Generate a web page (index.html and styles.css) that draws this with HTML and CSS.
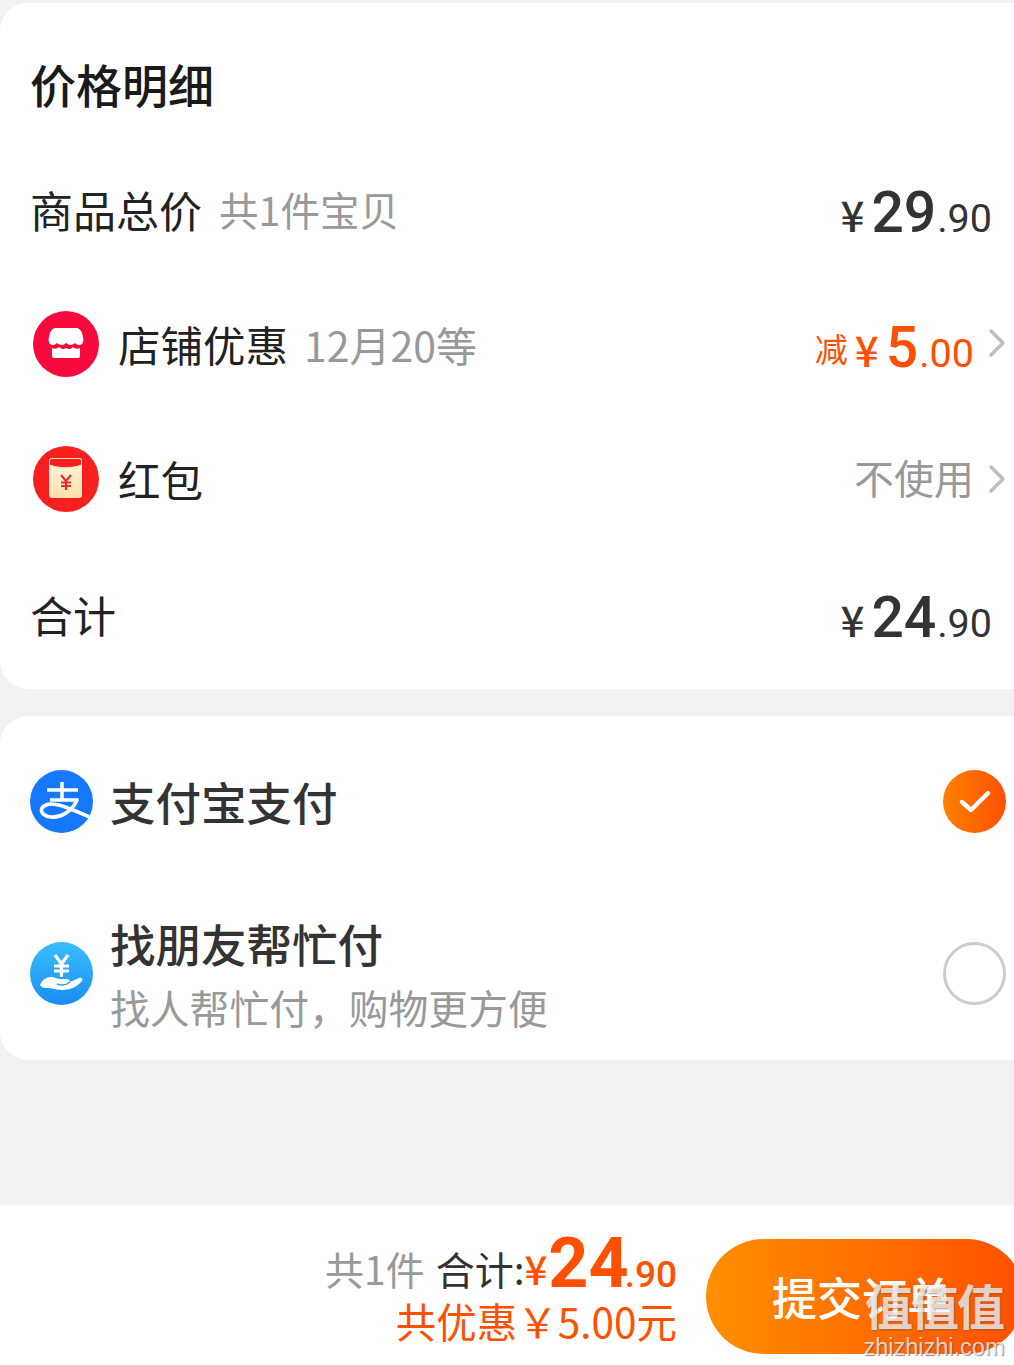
FILE: index.html
```html
<!DOCTYPE html>
<html lang="zh">
<head>
<meta charset="utf-8">
<title>价格明细</title>
<link rel="stylesheet" href="styles.css">
</head>
<body>
<div class="page">
  <section class="card detail">
    <h1 class="title">价格明细</h1>
    <div class="row">
      <div class="label label-plain"><span>商品总价</span><span class="note note-first">共1件宝贝</span></div>
      <div class="price"><span class="cur">¥</span><span class="big">29</span><span class="dec">.90</span></div>
    </div>
    <div class="row">
      <div class="label">
        <svg class="ico ico-list" viewBox="0 0 66 66"><circle cx="33" cy="33" r="33" fill="#f70a3d"/><path d="M23 17h20c3 0 5 2 6 5l1 4c1 3 0 6-1 7-2 2-5 1-7-1-2 2-6 3-9 0-3 3-7 2-9 0-2 2-5 3-7 1-1-1-2-4-1-7l1-4c1-3 3-5 6-5z" fill="#fff"/><path d="M19 37c2 1 5 1 7-1 2 2 5 3 7 1 3 2 5 1 7-1 2 2 4 2 7 1v8c0 1-1 2-2 2H21c-1 0-2-1-2-2z" fill="#fff"/></svg>
        <span>店铺优惠</span><span class="note note-shop">12月20等</span>
      </div>
      <div class="price orange"><span class="minus">减</span><span class="cur">¥</span><span class="big">5</span><span class="dec">.00</span>
        <svg class="chev" viewBox="0 0 18 30"><path d="M3 3l12 12L3 27" fill="none" stroke="#bdbdbd" stroke-width="3.4" stroke-linecap="round" stroke-linejoin="round"/></svg>
      </div>
    </div>
    <div class="row">
      <div class="label">
        <svg class="ico ico-list" viewBox="0 0 66 66"><defs><linearGradient id="pk" x1="0" y1="0" x2="0" y2="1"><stop offset="0" stop-color="#fff4de"/><stop offset="1" stop-color="#fde2ae"/></linearGradient></defs><circle cx="33" cy="33" r="33" fill="#f6201e"/><rect x="16" y="12" width="33" height="40" rx="3" fill="url(#pk)"/><path d="M16.5 15c0-2 1-2.500 2.500-2.500h27c1.500 0 2.500.5 2.500 2.500v4c-10 3.500-22 3.500-32 0z" fill="#f6201e" stroke="#ffe3c0" stroke-width="1"/><path d="M28 29l5 6 5-6M33 35v9M28 36.500h10M28 40h10" fill="none" stroke="#e8302a" stroke-width="2.200"/></svg>
        <span>红包</span>
      </div>
      <div class="price muted"><span class="muted-text">不使用</span>
        <svg class="chev" viewBox="0 0 18 30"><path d="M3 3l12 12L3 27" fill="none" stroke="#bdbdbd" stroke-width="3.4" stroke-linecap="round" stroke-linejoin="round"/></svg>
      </div>
    </div>
    <div class="row">
      <div class="label label-plain"><span>合计</span></div>
      <div class="price"><span class="cur">¥</span><span class="big">24</span><span class="dec">.90</span></div>
    </div>
  </section>

  <section class="card pay">
    <div class="pay-row pay-row-one">
      <svg class="ico" viewBox="0 0 63 63"><clipPath id="ac"><circle cx="31.5" cy="31.5" r="31.5"/></clipPath><circle cx="31.5" cy="31.500" r="31.5" fill="#1677ff"/><g clip-path="url(#ac)" fill="none" stroke="#fff" stroke-width="3.6"><path d="M17 20h31M32 12v18M20 30h28"/><path d="M47 30C42 42 30 48 21 47 11 46 8 38 16 35c9-4 28 5 48 14" stroke-linecap="round"/></g></svg>
      <div class="pay-name">支付宝支付</div>
      <span class="radio radio-on"><svg viewBox="0 0 32 26"><path d="M3 14l9 8L29 5" fill="none" stroke="#fff" stroke-width="4.4" stroke-linecap="round" stroke-linejoin="round"/></svg></span>
    </div>
    <div class="pay-row pay-row-two">
      <svg class="ico" viewBox="0 0 63 63"><defs><linearGradient id="fr" x1="0" y1="0" x2="0" y2="1"><stop offset="0" stop-color="#38bfff"/><stop offset="1" stop-color="#1b8cf0"/></linearGradient></defs><circle cx="31.5" cy="31.5" r="31.5" fill="url(#fr)"/><path d="M25 13l6.500 9 6.500-9M31.500 22v13M24 24h15M24 29h15" fill="none" stroke="#fff" stroke-width="3.200"/><path d="M10 43c2-5 6-8 11-8 3 0 6 2 10 2h5c3 0 4 1 4 3l9-4c3-1 4 1 3 3-4 5-11 9-20 9-5 0-10-2-14-2-3 0-6 0-8-3z" fill="#fff"/><path d="M27 42c4 1.500 9 1.500 13-2" fill="none" stroke="#2a9ff5" stroke-width="1.400"/></svg>
      <div class="pay-text">
        <div class="pay-name">找朋友帮忙付</div>
        <div class="pay-sub">找人帮忙付，购物更方便</div>
      </div>
      <span class="radio"></span>
    </div>
  </section>

  <footer class="bar">
    <div class="sum">
      <div class="sum-line"><span class="sum-count">共1件</span><span class="sum-label">合计:</span><span class="sum-cur">¥</span><span class="sum-big">24</span><span class="sum-dec">.90</span></div>
      <div class="sum-save">共优惠￥5.00元</div>
    </div>
    <button class="submit">提交订单</button>
  </footer>

  <div class="mark"><div class="mark-big">值值值</div><div class="mark-url">zhizhizhi.com</div></div>
</div>
</body>
</html>
```

FILE: styles.css
```css
* { box-sizing: border-box; }
html, body { margin: 0; padding: 0; }
body {
  background: #f2f2f2;
  font-family: "Noto Sans CJK SC", "Noto Sans", sans-serif;
  color: #222;
  overflow: hidden;
}
.page {
  position: relative;
  width: 1014px;
  height: 1365px;
  padding-top: 3px;
  display: flex;
  flex-direction: column;
  overflow: hidden;
}
.card { background: #fff; border-radius: 28px 0 0 28px; }
.detail { height: 686px; padding-left: 31px; }
.title {
  margin: 0 0 0 -1px;
  height: 138px;
  padding-top: 47px;
  font-size: 46px;
  line-height: 66px;
  font-weight: 500;
  color: #1a1a1a;
}
.row {
  height: 135px;
  display: flex;
  align-items: center;
  justify-content: space-between;
}
.label {
  display: flex;
  align-items: center;
  font-size: 42.5px;
  line-height: 60px;
  font-weight: 400;
}
.label-plain { margin-left: -1px; font-size: 43px; }
.ico { flex: none; display: block; width: 63px; height: 63px; }
.ico-list { width: 66px; height: 66px; margin: 0 19px 0 2px; }
.note { color: #999; }
.note-first { margin-left: 17px; font-size: 39.5px; }
.note-shop { margin-left: 16px; font-size: 41px; }
.price {
  display: flex;
  align-items: baseline;
  justify-content: flex-end;
  margin-top: 14px;
  padding-right: 22px;
  font-family: "Roboto", "Noto Sans CJK SC", sans-serif;
  color: #333;
}
.cur {
  font-family: "Noto Sans CJK SC", sans-serif;
  font-size: 42px;
  font-weight: 500;
  line-height: 60px;
  margin-right: 7px;
}
.big { font-size: 57px; line-height: 60px; font-weight: 500; }
.dec { font-size: 39.5px; line-height: 60px; margin-left: 1px; }
.orange { color: #ff5000; padding-right: 8px; }
.minus {
  font-family: "Noto Sans CJK SC", sans-serif;
  font-size: 33px;
  margin-right: 7px;
  transform: translateY(-5px);
}
.muted {
  color: #999;
  align-items: center;
  margin-top: 0;
  font-family: "Noto Sans CJK SC", sans-serif;
  font-size: 40px;
  line-height: 60px;
  padding-right: 8px;
}
.muted-text { padding-bottom: 4px; }
.chev { width: 18px; height: 30px; margin-left: 14px; align-self: center; }
.orange .chev { margin-top: -16px; }
.pay {
  height: 344px;
  margin-top: 27px;
  padding: 0 8px 0 30px;
}
.pay-row { display: flex; align-items: center; }
.pay-row-one { height: 170px; }
.pay-row-two { height: 175px; }
.pay-name {
  flex: 1;
  margin-left: 17px;
  font-size: 45.5px;
  line-height: 64px;
  font-weight: 500;
  color: #333;
}
.pay-text { flex: 1; margin-left: 17px; }
.pay-text .pay-name { margin-left: 0; }
.pay-sub {
  margin-top: 3px;
  font-size: 39.8px;
  line-height: 58px;
  color: #999;
}
.radio {
  flex: none;
  width: 63px;
  height: 63px;
  border-radius: 50%;
  border: 3px solid #ccc;
  display: flex;
  align-items: center;
  justify-content: center;
}
.radio-on {
  border: 0;
  background: linear-gradient(90deg, #ff8000, #ff5000);
}
.radio-on svg { width: 32px; height: 26px; }
.bar {
  margin-top: auto;
  height: 160px;
  background: #fff;
  display: flex;
  justify-content: flex-end;
  padding-top: 34px;
}
.sum {
  margin-top: -6px;
  margin-right: 29px;
  display: flex;
  flex-direction: column;
  align-items: flex-end;
}
.sum-line {
  display: flex;
  align-items: baseline;
  height: 56px;
  line-height: 56px;
}
.sum-count { color: #999; font-size: 39px; margin-right: 11px; }
.sum-label { color: #333; font-size: 39px; }
.sum-cur { color: #ff5000; font-size: 40px; font-weight: 500; }
.sum-big {
  color: #ff5000;
  font-family: "Roboto", sans-serif;
  font-size: 70px;
  font-weight: 700;
  margin-left: 1px;
  transform: translateY(2px);
}
.sum-dec {
  color: #ff5000;
  font-family: "Roboto", sans-serif;
  font-size: 37px;
  font-weight: 500;
  margin-left: -4px;
  transform: translateY(2px);
}
.sum-save {
  color: #ff5000;
  font-size: 40.5px;
  line-height: 50px;
  margin-top: 7px;
}
.submit {
  flex: none;
  width: 318px;
  height: 115px;
  margin-right: -10px;
  border: 0;
  border-radius: 58px;
  background: linear-gradient(90deg, #ff8f00, #ff5000);
  color: #fff;
  font-family: inherit;
  font-size: 45px;
  font-weight: 500;
  text-align: left;
  padding: 0 0 0 66px;
}
.mark {
  position: absolute;
  left: 861px;
  top: 1274px;
  width: 146px;
  text-align: center;
  color: rgba(255, 255, 255, .72);
  pointer-events: none;
}
.mark-big {
  font-size: 48px;
  line-height: 60px;
  font-weight: 700;
  letter-spacing: -2px;
  text-shadow: 1px 1px 2px rgba(90, 90, 90, .55);
}
.mark-url {
  font-family: "Liberation Sans", sans-serif;
  font-size: 23.5px;
  line-height: 24px;
  margin-top: 1px;
  white-space: nowrap;
  text-shadow: 1px 1px 1px rgba(90, 90, 90, .7);
}
```
